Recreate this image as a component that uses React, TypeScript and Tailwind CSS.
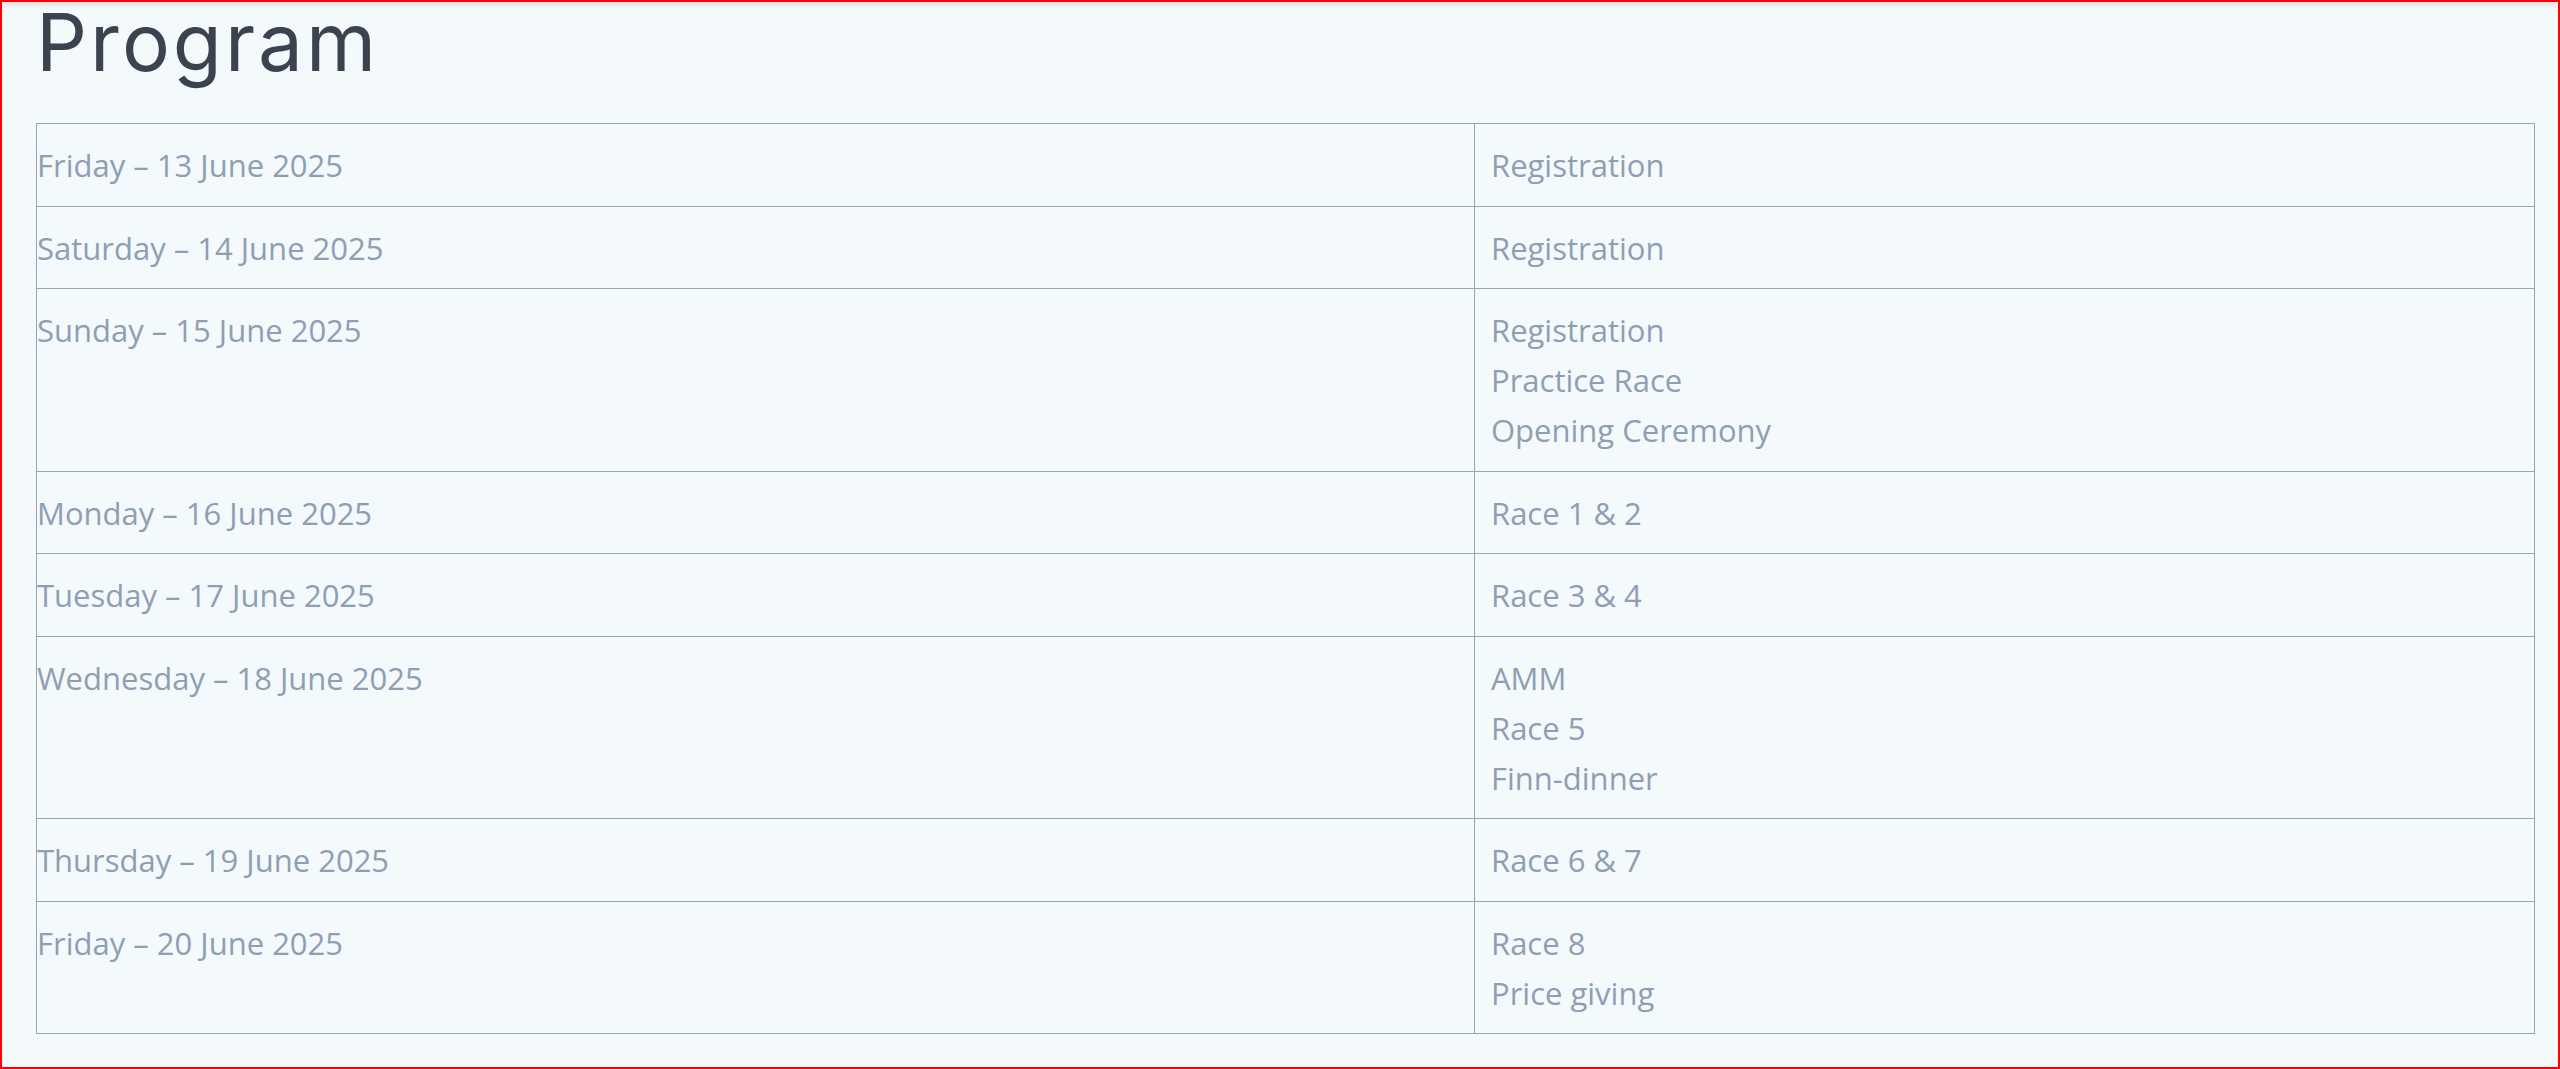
import React from "react";

const rows: [string, string[]][] = [
  ["Friday – 13 June 2025", ["Registration"]],
  ["Saturday – 14 June 2025", ["Registration"]],
  ["Sunday – 15 June 2025", ["Registration", "Practice Race", "Opening Ceremony"]],
  ["Monday – 16 June 2025", ["Race 1 & 2"]],
  ["Tuesday – 17 June 2025", ["Race 3 & 4"]],
  ["Wednesday – 18 June 2025", ["AMM", "Race 5", "Finn-dinner"]],
  ["Thursday – 19 June 2025", ["Race 6 & 7"]],
  ["Friday – 20 June 2025", ["Race 8", "Price giving"]],
];

export default function App() {
  return (
    <div className="box-border h-[1069px] w-full overflow-hidden border-2 border-[#ff0000] bg-[#f4f9fc] pl-[34px] pr-[23px] shadow-[inset_0_6px_6px_-4px_rgba(0,0,0,0.12)]">
      <h1 className="mt-0 text-[80px] leading-[80px] font-normal tracking-[3px] text-[#3d4250] [font-family:Inter,Lato,sans-serif]">
        Program
      </h1>
      <table className="mt-[41px] w-full border-collapse border border-[#97a4b5] text-[31px] leading-[50px] text-[#8e9fb3] [font-family:'Open_Sans','Noto_Sans',sans-serif]">
        <tbody>
          {rows.map(([day, items], i) => (
            <tr key={i}>
              <td className="w-[1438px] border border-[#97a4b5] pt-[16px] pb-[15.5px] pl-0 align-top">{day}</td>
              <td className="border border-[#97a4b5] pt-[16px] pb-[15.5px] pl-[16px] align-top">
                {items.map((t, j) => (
                  <div key={j}>{t}</div>
                ))}
              </td>
            </tr>
          ))}
        </tbody>
      </table>
    </div>
  );
}
